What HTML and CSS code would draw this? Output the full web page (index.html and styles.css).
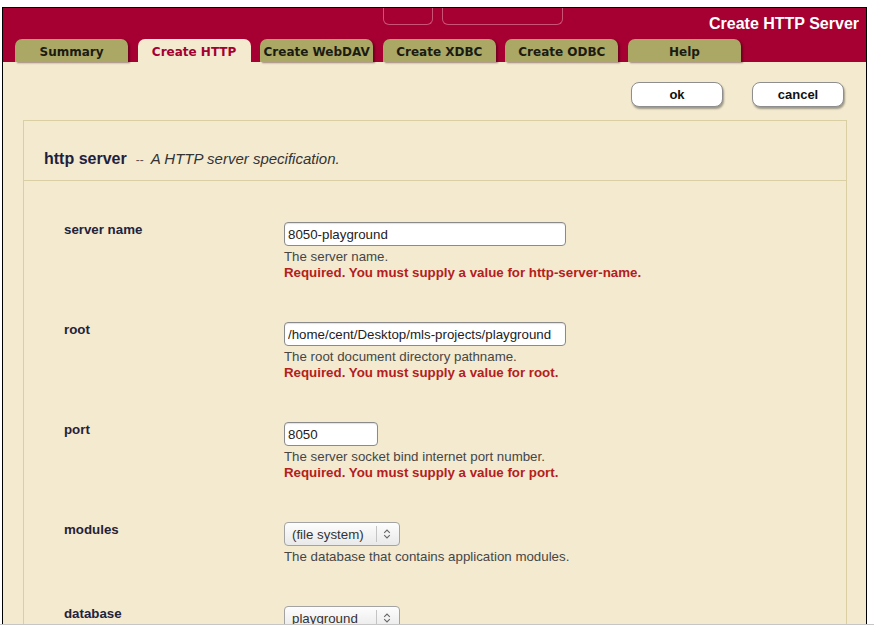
FILE: index.html
```html
<!DOCTYPE html>
<html>
<head>
<meta charset="utf-8">
<title>Create HTTP Server</title>
<link rel="stylesheet" href="styles.css">
</head>
<body>
<div class="viewport">
  <div class="frame">
    <header class="masthead">
      <div class="masthead-top">
        <div class="hangers"><span class="hanger hanger-a"></span><span class="hanger hanger-b"></span></div>
        <div class="title">Create HTTP Server</div>
      </div>
      <nav class="tabs">
        <span class="tab">Summary</span>
        <span class="tab tab-active">Create HTTP</span>
        <span class="tab">Create WebDAV</span>
        <span class="tab">Create XDBC</span>
        <span class="tab">Create ODBC</span>
        <span class="tab">Help</span>
      </nav>
    </header>

    <div class="toolbar">
      <button class="btn">ok</button>
      <button class="btn">cancel</button>
    </div>

    <section class="panel">
      <div class="panel-head">
        <span class="panel-title">http server</span><span class="dash">--</span><em class="panel-desc">A HTTP server specification.</em>
      </div>
      <div class="panel-body">
        <div class="row">
          <div class="label">server name</div>
          <div class="field">
            <input class="text text-wide" type="text" value="8050-playground">
            <div class="help">The server name.</div>
            <div class="error">Required. You must supply a value for http-server-name.</div>
          </div>
        </div>
        <div class="row">
          <div class="label">root</div>
          <div class="field">
            <input class="text text-wide" type="text" value="/home/cent/Desktop/mls-projects/playground">
            <div class="help">The root document directory pathname.</div>
            <div class="error">Required. You must supply a value for root.</div>
          </div>
        </div>
        <div class="row">
          <div class="label">port</div>
          <div class="field">
            <input class="text text-short" type="text" value="8050">
            <div class="help">The server socket bind internet port number.</div>
            <div class="error">Required. You must supply a value for port.</div>
          </div>
        </div>
        <div class="row">
          <div class="label">modules</div>
          <div class="field">
            <div class="select"><span class="select-value">(file system)</span><span class="select-arrow"><svg width="8" height="12" viewBox="0 0 8 12"><path d="M1.2 4.8 L4 2 L6.8 4.8 M1.2 7.2 L4 10 L6.8 7.2" fill="none" stroke="#666" stroke-width="1.1"/></svg></span></div>
            <div class="help">The database that contains application modules.</div>
          </div>
        </div>
        <div class="row">
          <div class="label">database</div>
          <div class="field">
            <div class="select"><span class="select-value">playground</span><span class="select-arrow"><svg width="8" height="12" viewBox="0 0 8 12"><path d="M1.2 4.8 L4 2 L6.8 4.8 M1.2 7.2 L4 10 L6.8 7.2" fill="none" stroke="#666" stroke-width="1.1"/></svg></span></div>
          </div>
        </div>
      </div>
    </section>
  </div>
</div>
</body>
</html>
```

FILE: styles.css
```css
html, body {
  margin: 0;
  padding: 0;
  background: #ffffff;
}

body {
  font-family: "Liberation Sans", Arial, sans-serif;
}

.viewport {
  box-sizing: border-box;
  height: 625px;
  padding: 7px 0 0 2px;
  overflow: hidden;
  border-bottom: 1px solid #c6c6c6;
}

.frame {
  box-sizing: border-box;
  width: 865px;
  min-height: 900px;
  border: 1px solid #000;
  border-bottom: none;
  background: #f3ead0;
}

/* ---------- masthead ---------- */
.masthead {
  height: 54px;
  background: #a50031;
  display: flex;
  flex-direction: column;
}

.masthead-top {
  height: 31px;
  display: flex;
  align-items: flex-start;
}

.hangers {
  display: flex;
  gap: 9px;
  margin-left: 380px;
}

.hanger {
  display: block;
  height: 16px;
  border: 1px solid #c95474;
  border-top: none;
  border-radius: 0 0 6px 6px;
}

.hanger-a { width: 48px; }
.hanger-b { width: 119px; }

.title {
  margin-left: auto;
  padding: 6px 7px 0 0;
  line-height: 20px;
  font-size: 16px;
  font-weight: bold;
  color: #ffffff;
}

.tabs {
  display: flex;
  gap: 9.6px;
  padding-left: 12px;
  margin-top: auto;
}

.tab {
  box-sizing: border-box;
  width: 113px;
  height: 23px;
  padding-top: 3px;
  line-height: 20px;
  text-align: center;
  font-family: "DejaVu Sans", Verdana, sans-serif;
  font-size: 12px;
  font-weight: bold;
  color: #1b1b12;
  background: #aaa864;
  border-radius: 7px 7px 0 0;
  box-shadow: 2px 1px 2px rgba(50, 0, 10, 0.45);
}

.tab-active {
  background: #f3ead0;
  color: #a50031;
  box-shadow: none;
}

/* ---------- toolbar ---------- */
.toolbar {
  display: flex;
  justify-content: flex-end;
  gap: 29px;
  padding: 20px 22px 0 0;
}

.btn {
  box-sizing: border-box;
  width: 92px;
  height: 25px;
  padding: 0;
  background: #ffffff;
  border: 1px solid #8e8e8e;
  border-radius: 8px;
  box-shadow: 1px 2px 2px rgba(0, 0, 0, 0.35);
  font-family: "Liberation Sans", Arial, sans-serif;
  font-size: 13px;
  font-weight: bold;
  color: #111;
}

/* ---------- panel ---------- */
.panel {
  margin: 13px 19px 0 20px;
  border: 1px solid #d9cfa2;
}

.panel-head {
  height: 60px;
  box-sizing: border-box;
  padding: 28px 20px 0 20px;
  line-height: 20px;
  border-bottom: 1px solid #d9cfa2;
  white-space: nowrap;
}

.panel-title {
  font-size: 16px;
  font-weight: bold;
  color: #1f1f3e;
}

.dash {
  margin: 0 7px 0 9px;
  font-size: 12px;
  color: #555;
}

.panel-desc {
  font-size: 15px;
  color: #333;
}

.panel-body {
  padding: 41px 20px 0 40px;
}

.row {
  display: grid;
  grid-template-columns: 220px 1fr;
  padding-bottom: 41px;
}

.label {
  line-height: 16px;
  font-size: 13.3px;
  font-weight: bold;
  color: #23233a;
}

.field {
  display: flex;
  flex-direction: column;
  align-items: flex-start;
}

.text {
  box-sizing: border-box;
  height: 24px;
  margin: 0 0 3px 0;
  padding: 0 3px;
  border: 1px solid #8a8a8a;
  border-radius: 4px;
  background: #fff;
  box-shadow: inset 0 1px 1px rgba(0, 0, 0, 0.12);
  font-family: "Liberation Sans", Arial, sans-serif;
  font-size: 13.3px;
  color: #222;
}

.text-wide { width: 282px; }
.text-short { width: 94px; }

.help {
  line-height: 16px;
  font-size: 13.3px;
  color: #464646;
}

.error {
  line-height: 16px;
  font-size: 13.3px;
  font-weight: bold;
  color: #b3201e;
}

.select {
  box-sizing: border-box;
  width: 116px;
  height: 24px;
  margin-bottom: 3px;
  display: flex;
  align-items: center;
  border: 1px solid #a3a3a3;
  border-radius: 4px;
  background: linear-gradient(#fdfdfd, #e9e9e9);
  font-size: 13.3px;
  color: #333;
}

.select-value {
  flex: 1;
  padding-left: 7px;
}

.select-arrow {
  display: flex;
  align-items: center;
  height: 16px;
  padding: 0 8px 0 6px;
  border-left: 1px solid #c4c4c4;
}
```
